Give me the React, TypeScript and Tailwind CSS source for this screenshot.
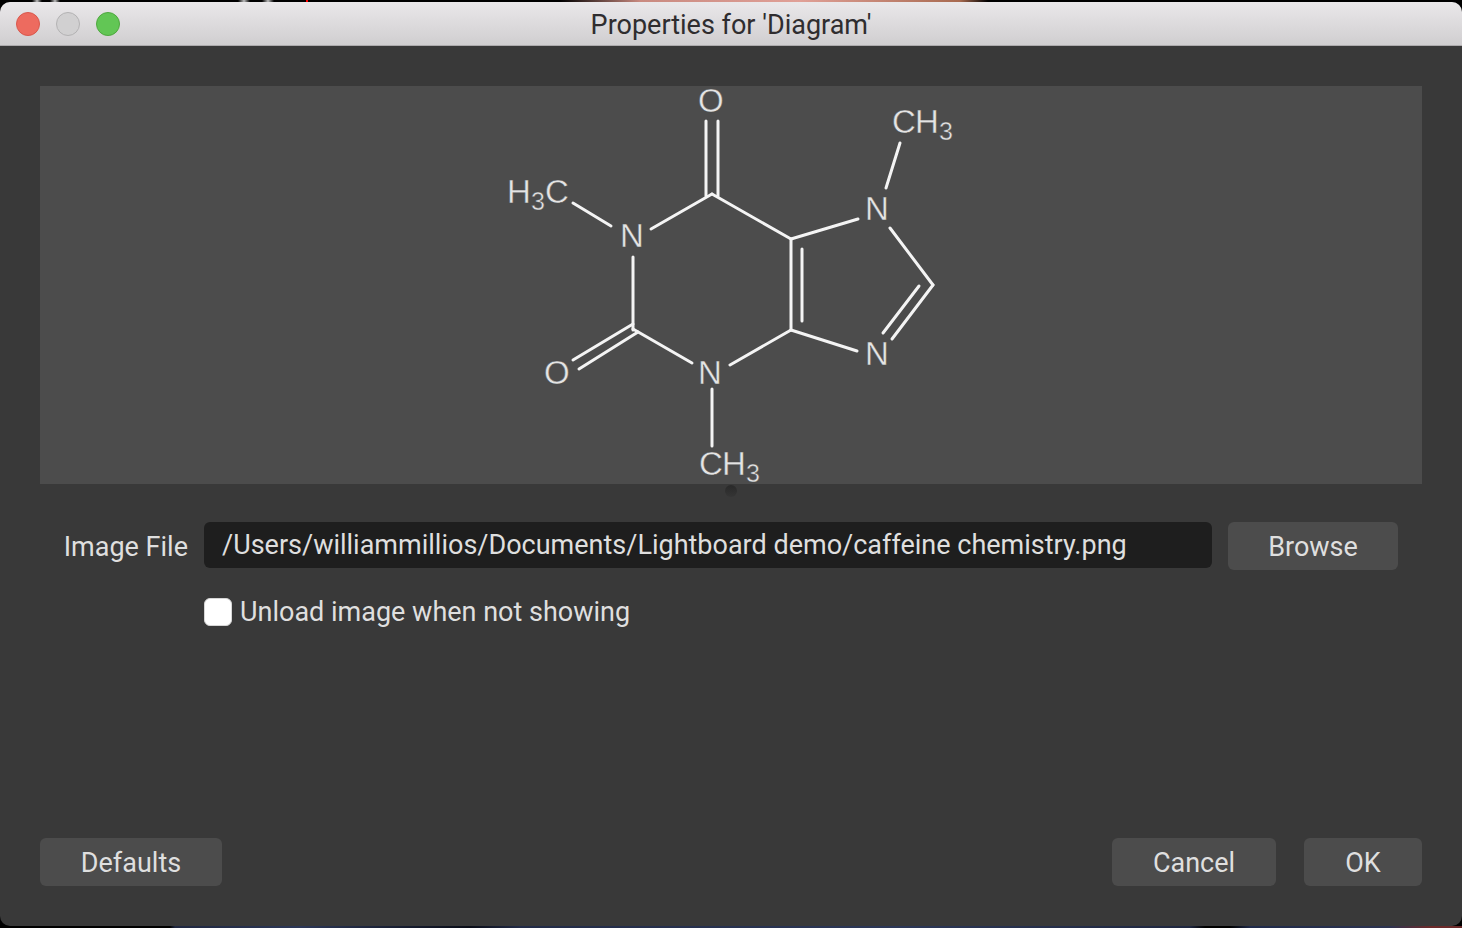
import { useState } from "react";

type Bond = [number, number, number, number];

const bonds: Bond[] = [
  // six-membered ring
  [651, 229, 712, 194],
  [712, 194, 791, 239],
  [791, 239, 791, 330],
  [791, 330, 730, 365],
  [692, 363, 633, 329],
  [633, 330, 633, 257],
  [802, 249, 802, 321],
  // five-membered ring
  [791, 239, 858, 219],
  [890, 228, 933, 285],
  [933, 285, 892, 339],
  [919, 286, 883, 333],
  [791, 330, 857, 351],
  // carbonyls
  [706, 121, 706, 196],
  [718, 121, 718, 196],
  [633, 324, 573, 360],
  [638, 332, 579, 369],
  // methyls
  [573, 203, 611, 226],
  [900, 143, 886, 188],
  [712, 389, 712, 446],
];

const atoms = [
  { label: "O", x: 698, y: 112 },
  { label: "O", x: 544, y: 384 },
  { label: "N", x: 620, y: 247 },
  { label: "N", x: 865, y: 220 },
  { label: "N", x: 865, y: 365 },
  { label: "N", x: 698, y: 384 },
];

const methyls = [
  { x: 892, y: 133 },
  { x: 699, y: 475 },
];

const buttonClass =
  "h-12 rounded-md bg-[#4c4c4c] pt-0.5 text-center text-[#dfdfdf] hover:bg-[#555555]";

function Molecule() {
  return (
    <svg
      viewBox="501 86 460 398"
      className="h-[398px] max-w-full overflow-visible"
      role="img"
      aria-label="Caffeine structure"
    >
      <g stroke="#f4f4f4" strokeWidth="3" strokeLinecap="round">
        {bonds.map(([x1, y1, x2, y2], i) => (
          <line key={i} x1={x1} y1={y1} x2={x2} y2={y2} />
        ))}
      </g>
      <g
        fill="#e4e4e4"
        stroke="#4c4c4c"
        strokeWidth="0.4"
        fontSize="33"
        fontFamily="'Liberation Sans', sans-serif"
      >
        {atoms.map((a) => (
          <text key={`${a.x}-${a.y}`} x={a.x} y={a.y}>
            {a.label}
          </text>
        ))}
        {methyls.map((m) => (
          <text key={m.x} x={m.x} y={m.y}>
            C<tspan x={m.x + 23}>H</tspan>
            <tspan x={m.x + 47} y={m.y + 7} fontSize="25">
              3
            </tspan>
          </text>
        ))}
        <text x="507" y="203">
          H
          <tspan x="531" y="210" fontSize="25">
            3
          </tspan>
          <tspan x="545" y="203">
            C
          </tspan>
        </text>
      </g>
    </svg>
  );
}

function TitleBar() {
  return (
    <header className="grid h-11 grid-cols-[1fr_auto_1fr] items-center border-b border-[#adabad] bg-gradient-to-b from-[#eae8ea] to-[#d0ced0] px-4">
      <div className="flex gap-4">
        <button
          aria-label="Close"
          className="size-6 rounded-full border border-[#d8584d] bg-[#ed6b5f]"
        />
        <button
          aria-label="Minimize"
          disabled
          className="size-6 rounded-full border border-[#b3b2b3] bg-[#d1d0d1]"
        />
        <button
          aria-label="Zoom"
          className="size-6 rounded-full border border-[#4fa73f] bg-[#62c655]"
        />
      </div>
      <h1 className="pt-0.5 text-[#2f2d2f]">Properties for 'Diagram'</h1>
    </header>
  );
}

export default function App() {
  const [file, setFile] = useState(
    "/Users/williammillios/Documents/Lightboard demo/caffeine chemistry.png"
  );
  const [unload, setUnload] = useState(false);

  return (
    <div className="flex min-h-screen flex-col bg-black font-['Roboto',sans-serif] text-[27px] leading-8">
      {/* slivers of the desktop behind the window */}
      <div className="h-0.5 bg-[linear-gradient(90deg,#000_32px,#bbb_37px,#000_42px,#000_50px,#bbb_55px,#000_60px,#000_238px,#bbb_244px,#000_250px,#000_262px,#bbb_268px,#000_274px,#000_306px,#f00_306px,#f00_308px,#000_308px,#000_560px,#c98a80_640px,#e0a097_800px,#a86a50_960px,#000_988px)]" />
      <div className="flex flex-1 flex-col overflow-hidden rounded-[10px] bg-[#393939] text-[#dfdfdf]">
        <TitleBar />
        <main className="flex flex-1 flex-col p-10">
          <div className="flex justify-center bg-[#4c4c4c]">
            <Molecule />
          </div>
          <div className="flex h-[38px] justify-center">
            <div className="mt-px size-3 rounded-full bg-gradient-to-b from-[#292929] to-[#353535]" />
          </div>

          <form
            className="flex flex-1 flex-col"
            onSubmit={(e) => e.preventDefault()}
          >
            <div className="grid grid-cols-[148px_1fr_170px] gap-x-4 pr-6">
              <label htmlFor="file" className="self-center pt-0.5 text-right">
                Image File
              </label>
              <input
                id="file"
                type="text"
                value={file}
                onChange={(e) => setFile(e.target.value)}
                className="h-[46px] min-w-0 rounded-md bg-[#1e1e1e] px-[18px] outline-none"
              />
              <button type="button" className={buttonClass}>
                Browse
              </button>
            </div>
            <div className="mt-[26px] flex items-center gap-2 pl-[164px]">
              <input
                id="unload"
                type="checkbox"
                checked={unload}
                onChange={(e) => setUnload(e.target.checked)}
                className="size-7 appearance-none rounded-md border border-[#d6d6d6] bg-white checked:bg-[#3b82f6]"
              />
              <label htmlFor="unload">Unload image when not showing</label>
            </div>

            <div className="mt-auto flex gap-7">
              <button type="button" className={`${buttonClass} w-[182px]`}>
                Defaults
              </button>
              <button
                type="button"
                className={`${buttonClass} ml-auto w-[164px]`}
              >
                Cancel
              </button>
              <button type="submit" className={`${buttonClass} w-[118px]`}>
                OK
              </button>
            </div>
          </form>
        </main>
      </div>
      <div className="h-0.5 bg-[linear-gradient(90deg,#000_170px,#1f2740_175px,#2c3757_300px,#0a0d18_470px,#222b47_520px,#2c3757_900px,#1f2740_1190px,#000_1205px,#000_1230px,#1f2a4a_1250px,#2c3350_1390px,#6b2a2a_1430px)]" />
    </div>
  );
}
